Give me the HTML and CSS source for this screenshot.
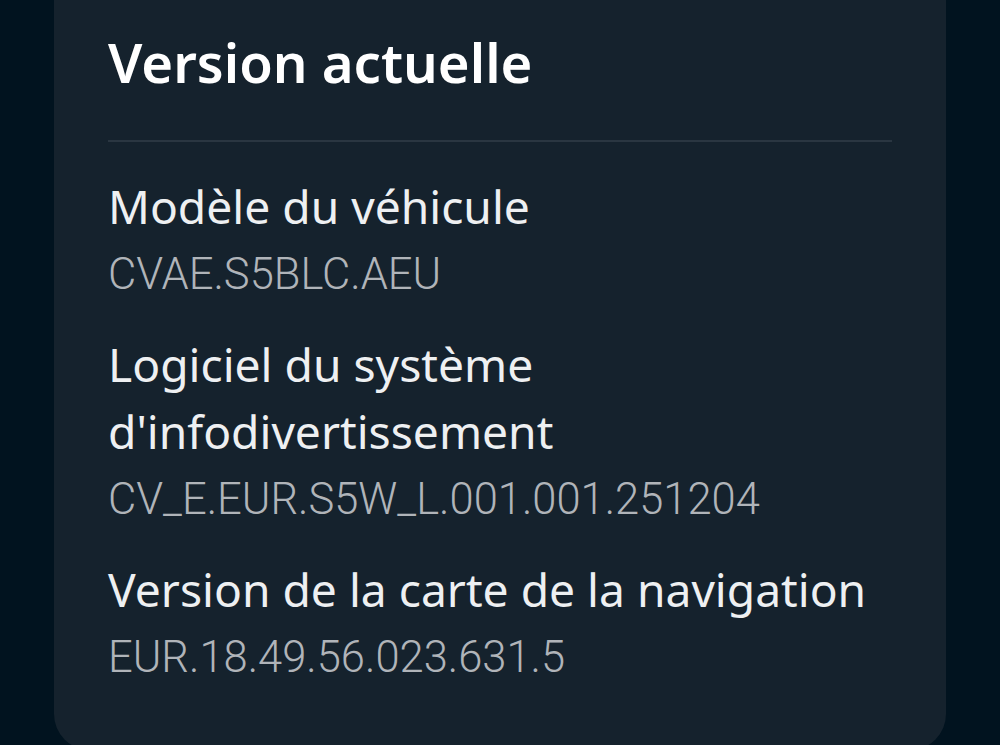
FILE: index.html
```html
<!DOCTYPE html>
<html lang="fr">
<head>
<meta charset="utf-8">
<link rel="stylesheet" href="styles.css">
</head>
<body>
<main class="page">
  <section class="card">
    <h1 class="title">Version actuelle</h1>
    <hr class="divider">
    <div class="item">
      <div class="label">Modèle du véhicule</div>
      <div class="value">CVAE.S5BLC.AEU</div>
    </div>
    <div class="item">
      <div class="label">Logiciel du système<br>d'infodivertissement</div>
      <div class="value">CV_E.EUR.S5W_L.001.001.251204</div>
    </div>
    <div class="item">
      <div class="label">Version de la carte de la navigation</div>
      <div class="value">EUR.18.49.56.023.631.5</div>
    </div>
  </section>
</main>
</body>
</html>
```
FILE: styles.css
```css
html, body {
  margin: 0;
  padding: 0;
  background: #01131f;
  height: 745px;
  overflow: hidden;
}
.page {
  padding: 0 54px;
}
.card {
  background: #15222d;
  border-radius: 0 0 36px 36px;
  padding: 20px 54px 0;
  height: 770px;
  box-sizing: border-box;
  margin-top: -20px;
}
.title {
  margin: 32px 0 0;
  font-family: "Noto Sans", sans-serif;
  font-weight: 600;
  font-size: 54.5px;
  line-height: 60px;
  color: #ffffff;
}
.divider {
  border: 0;
  height: 2px;
  background: #2a3641;
  margin: 48px 0 0;
}
.item {
  margin-top: 31px;
}
.item + .item {
  margin-top: 21px;
}
.label {
  font-family: "Noto Sans", sans-serif;
  font-size: 46.2px;
  line-height: 67px;
  color: #eef0f2;
}
.value {
  font-family: Roboto, sans-serif;
  font-weight: 300;
  font-size: 43.5px;
  line-height: 70px;
  color: #b0b4b9;
}
```
